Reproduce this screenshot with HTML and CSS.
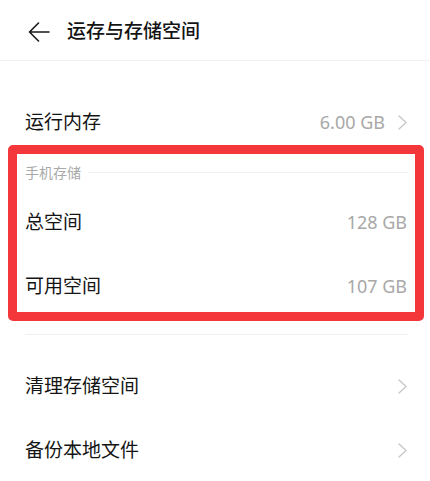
FILE: index.html
```html
<!DOCTYPE html>
<html lang="zh-CN">
<head>
  <meta charset="UTF-8">
  <meta name="viewport" content="width=device-width, initial-scale=1.0">
  <title>运存与存储空间</title>
  <link rel="stylesheet" href="styles.css">
</head>
<body>
  <header class="topbar">
    <svg class="back-icon" width="22" height="20" viewBox="0 0 22 20" aria-hidden="true">
      <path d="M21 10H1.5M10.5 1L1.5 10L10.5 19" fill="none" stroke="#1a1a1a" stroke-width="1.6" stroke-linecap="round" stroke-linejoin="round"/>
    </svg>
    <h1 class="title">运存与存储空间</h1>
  </header>

  <main class="settings">
    <!-- 运行内存 -->
    <div class="row">
      <span class="row-label">运行内存</span>
      <span class="row-right">
        <span class="row-value">6.00 GB</span>
        <svg class="chevron" width="9" height="15" viewBox="0 0 9 15" aria-hidden="true">
          <path d="M1 1L8 7.5L1 14" fill="none" stroke="#c8c8c8" stroke-width="1.4" stroke-linecap="round" stroke-linejoin="round"/>
        </svg>
      </span>
    </div>

    <!-- 手机存储 -->
    <section class="group marked">
      <div class="group-title">
        <span>手机存储</span>
        <i class="group-rule"></i>
      </div>
      <div class="row">
        <span class="row-label">总空间</span>
        <span class="row-value">128 GB</span>
      </div>
      <div class="row">
        <span class="row-label">可用空间</span>
        <span class="row-value">107 GB</span>
      </div>
    </section>

    <hr class="divider">

    <div class="row">
      <span class="row-label">清理存储空间</span>
      <svg class="chevron" width="9" height="15" viewBox="0 0 9 15" aria-hidden="true">
        <path d="M1 1L8 7.5L1 14" fill="none" stroke="#c8c8c8" stroke-width="1.4" stroke-linecap="round" stroke-linejoin="round"/>
      </svg>
    </div>
    <div class="row">
      <span class="row-label">备份本地文件</span>
      <svg class="chevron" width="9" height="15" viewBox="0 0 9 15" aria-hidden="true">
        <path d="M1 1L8 7.5L1 14" fill="none" stroke="#c8c8c8" stroke-width="1.4" stroke-linecap="round" stroke-linejoin="round"/>
      </svg>
    </div>
  </main>
</body>
</html>
```

FILE: styles.css
```css
:root {
  --text: #141414;
  --muted: #a8a8a8;
  --line: #f1f1f1;
  --mark: #f4373a;
}

* {
  margin: 0;
  padding: 0;
  box-sizing: border-box;
}

body {
  font-family: "Noto Sans", "Noto Sans CJK SC", sans-serif;
  background-color: #ffffff;
  color: var(--text);
  overflow: hidden;
}

.topbar {
  height: 61px;
  display: flex;
  align-items: center;
  padding-left: 28px;
  padding-top: 3px;
  border-bottom: 1px solid var(--line);
}

.back-icon {
  flex-shrink: 0;
}

.title {
  margin-left: 17px;
  font-size: 19px;
  font-weight: 500;
  line-height: 1;
}

.settings {
  padding-top: 29px;
}

.row {
  height: 64px;
  display: flex;
  align-items: center;
  justify-content: space-between;
  padding: 0 23px 0 25px;
}

.row-label {
  font-size: 19px;
  line-height: 1;
}

.row-right {
  display: flex;
  align-items: center;
  gap: 13px;
}

.row-value {
  font-size: 18px;
  color: var(--muted);
  line-height: 1;
}

.chevron {
  flex-shrink: 0;
}

.group {
  position: relative;
}

/* 标注框 */
.marked::after {
  content: "";
  position: absolute;
  top: -9px;
  left: 8px;
  right: 6px;
  bottom: -3px;
  border: 9px solid var(--mark);
  border-radius: 5px;
  pointer-events: none;
}

.group-title {
  height: 36px;
  display: flex;
  align-items: center;
  gap: 7px;
  padding: 0 22px 0 25px;
  font-size: 14px;
  color: var(--muted);
}

.group-rule {
  flex: 1;
  height: 1px;
  background-color: var(--line);
}

.divider {
  border: none;
  height: 1px;
  background-color: var(--line);
  margin: 16px 22px 19px 25px;
}
```
